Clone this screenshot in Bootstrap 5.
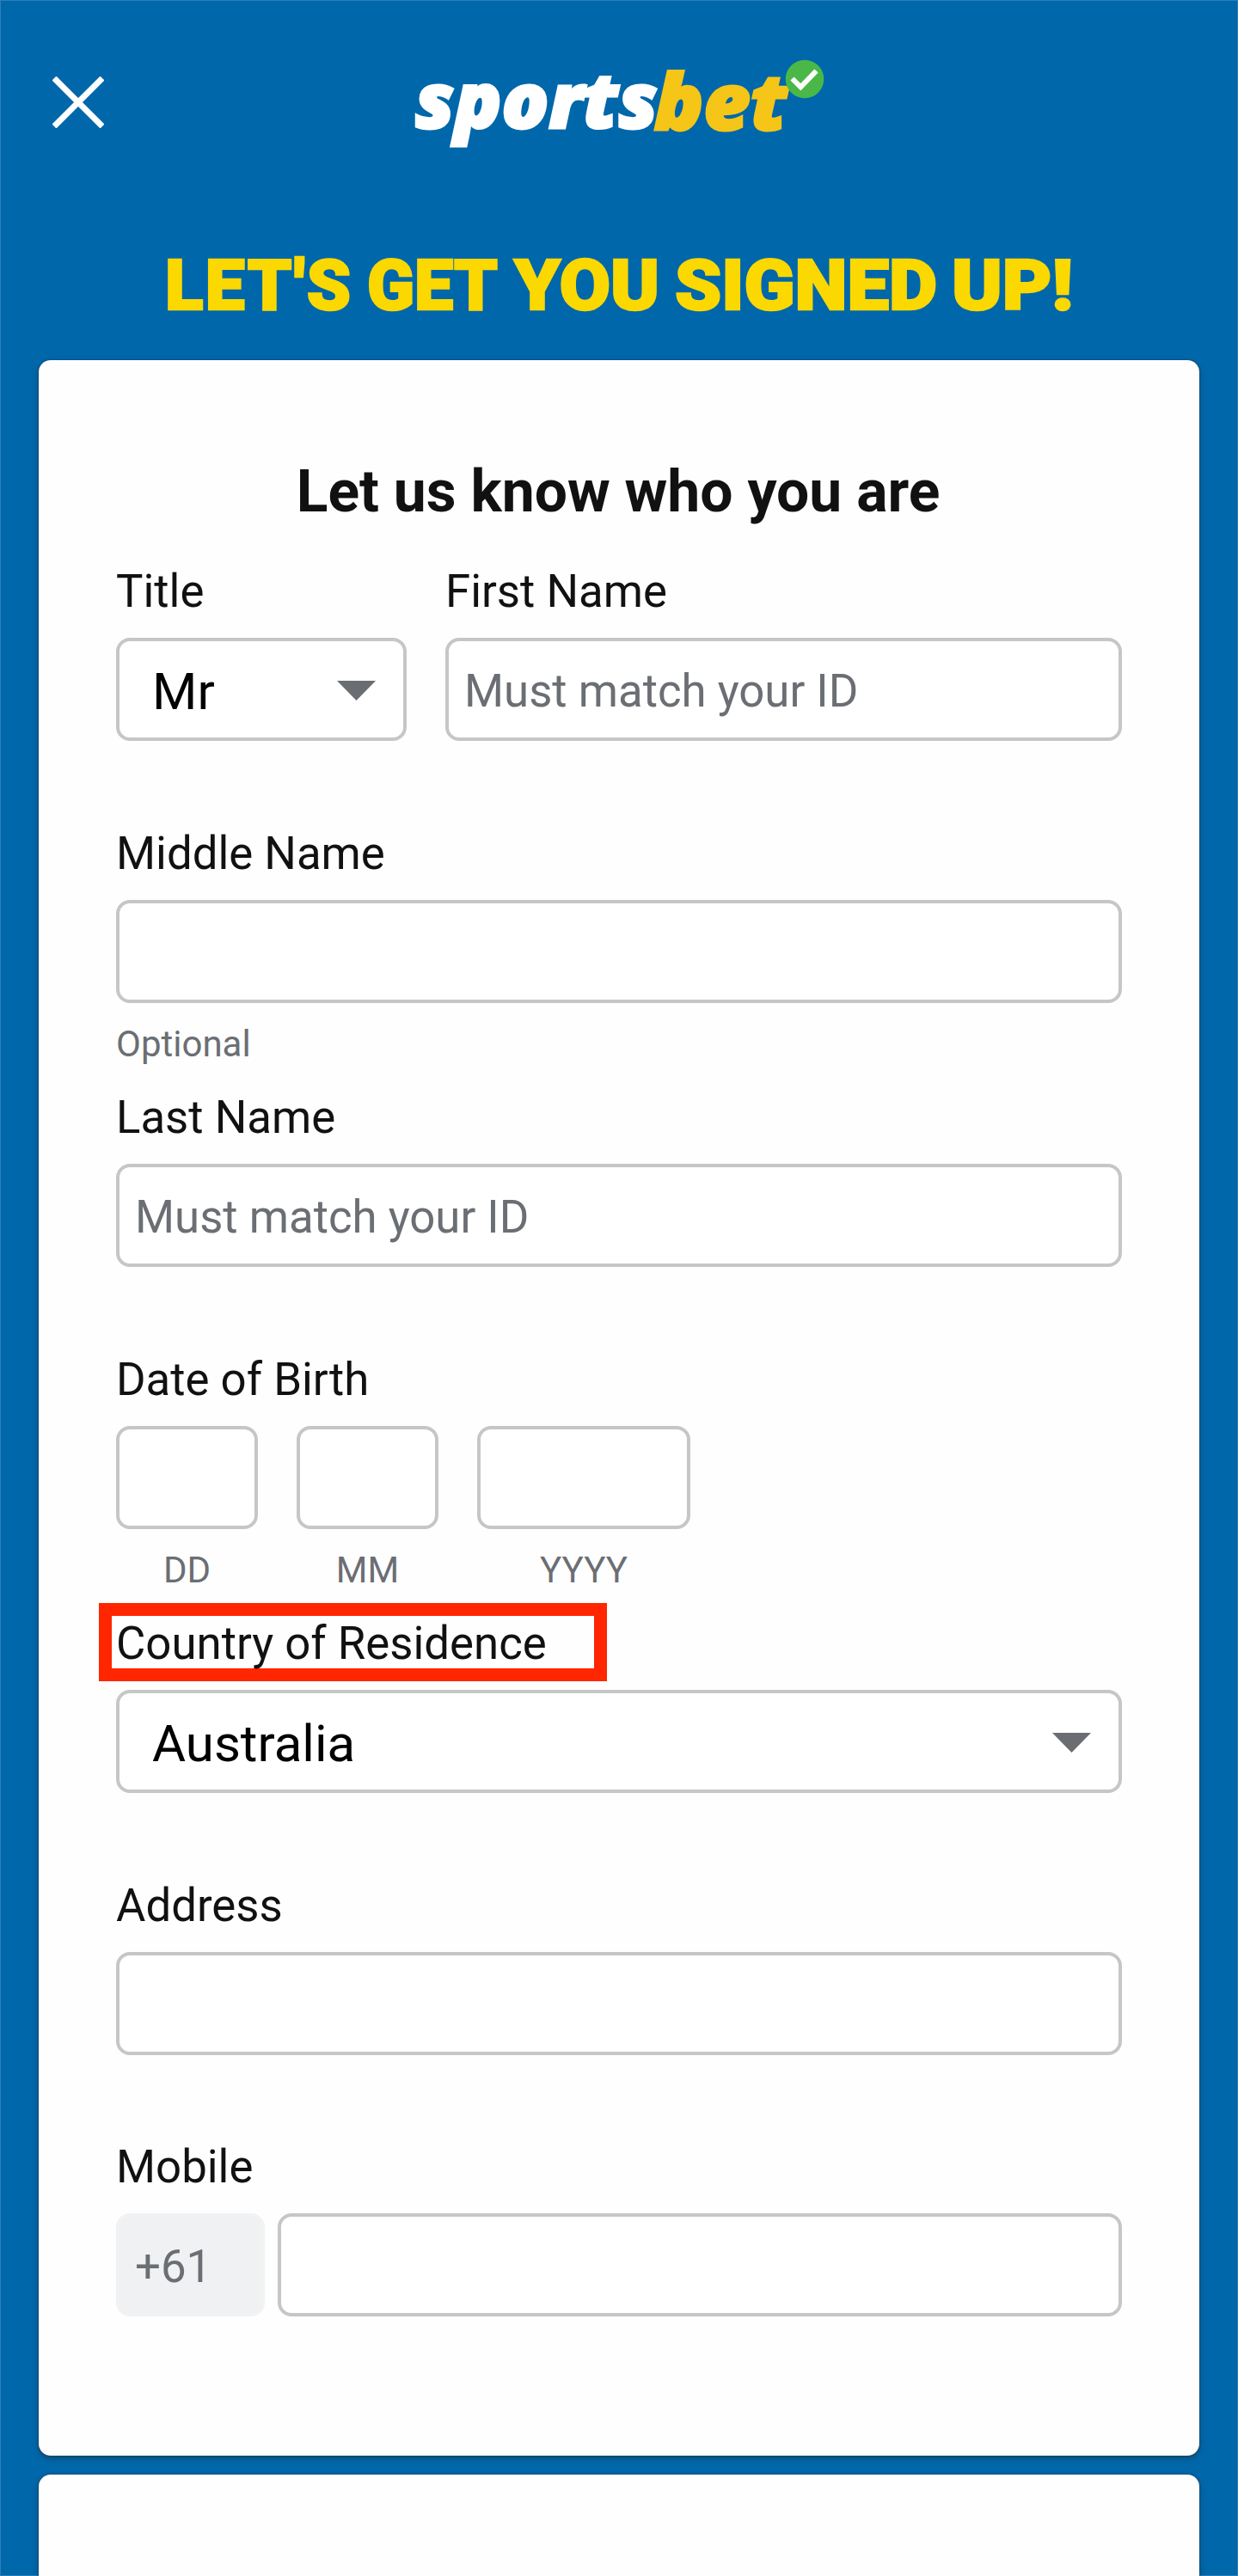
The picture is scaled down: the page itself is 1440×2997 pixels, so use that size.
<!DOCTYPE html>
<html lang="en">
<head>
<meta charset="utf-8">
<meta name="viewport" content="width=device-width, initial-scale=1">
<title>Sportsbet – Sign up</title>
<link href="https://cdn.jsdelivr.net/npm/bootstrap@5.3.0/dist/css/bootstrap.min.css" rel="stylesheet">
<style>
  body { background: #0067ab; color: #111; font-family: Roboto, "Liberation Sans", sans-serif; }
  .signup-page { height: 2997px; padding: 0 45px; box-shadow: inset 0 0 0 1px #2b7fb9; }
  .top-bar { height: 237px; padding: 40px 0 0 16px; }
  .close-btn { width: 60px; height: 60px; margin-top: 49px; line-height: 0; }
  .brand-logo { margin-left: 341px; }
  .headline { height: 182px; margin: 0; }
  .panel { border: 0; border-radius: 14px; background: #fefefe; box-shadow: 0 3px 6px rgba(40,40,40,.5), 0 0 2px rgba(40,40,40,.7); }
  .panel-main { height: 2438px; padding: 112px 90px 0; }
  .panel-next { height: 118px; margin-top: 22px; border-radius: 14px 14px 0 0; }
  .panel-title { font-size: 67.8px; font-weight: 700; line-height: 80px; height: 125px; padding-top: 1px; margin: 0 -10px 0 -12px; }
  .field { height: 305px; }
  .field-hinted { height: 307px; }
  .field-short { height: 304px; }
  .field-label { display: block; font-size: 52.75px; line-height: 62px; padding-top: 1px; margin-bottom: 23px; width: max-content; }
  .box { height: 120px; border: 4px solid #c5c7c7; border-radius: 16px; background: #fff; font-size: 52.75px; line-height: 62px; padding: 3px 18px 0; color: #111; }
  .box::placeholder { color: #6b6e73; opacity: 1; }
  .picker { font-size: 60px; color: #000; padding: 6px 32px 0 38px; }
  .picker svg { margin-bottom: 3px; }
  .hint { font-size: 42px; line-height: 50px; color: #6b6e73; margin-top: 23px; }
  .gap-fields { gap: 45px; }
  .title-col { width: 338px; }
  .day-col { width: 165px; }
  .year-col { width: 248px; }
  .prefix { width: 173px; margin-right: 15px; background: #eff1f3; border-color: #f1f3f3; color: #6b6e73; }
  .highlight { left: -20.5px; top: -15px; width: 591px; height: 91px; border: 15px solid #ff2600; }
</style>
</head>
<body>
<main class="signup-page overflow-hidden">
  <header class="top-bar d-flex align-items-start">
    <button type="button" class="close-btn btn p-0 border-0" aria-label="Close">
      <svg width="60" height="60" viewBox="0 0 60 60" fill="none" stroke="#fff" stroke-width="7"><path d="M2 2 58 58M58 2 2 58"/></svg>
    </button>
    <svg class="brand-logo" width="520" height="160" viewBox="462 40 520 160" role="img" aria-label="sportsbet">
      <g font-family="'Open Sans', sans-serif" font-weight="800" font-style="italic" font-size="88" stroke-width="3">
        <text x="483" y="149" fill="#fff" stroke="#fff" textLength="282" lengthAdjust="spacingAndGlyphs">sports</text>
        <text x="761" y="150.500" font-size="91" fill="#f5c517" stroke="#f5c517" textLength="155" lengthAdjust="spacingAndGlyphs">bet</text>
      </g>
      <circle cx="936" cy="92" r="22.300" fill="#4ab848"/>
      <path d="m921.500 91.500 9.800 9.800L949.500 82.500" fill="none" stroke="#fff" stroke-width="6"/>
    </svg>
  </header>

  <h1 class="headline">
    <svg class="d-block" width="1350" height="182" viewBox="45 237 1350 182" font-family="Roboto, sans-serif" font-weight="900" font-size="82" fill="#fad800" stroke="#fad800" stroke-width="2.500">
      <text x="192" y="359.500" textLength="216" lengthAdjust="spacing">LET'S</text>
      <text x="427" y="359.500" textLength="152" lengthAdjust="spacingAndGlyphs">GET</text>
      <text x="598" y="359.500" textLength="169" lengthAdjust="spacingAndGlyphs">YOU</text>
      <text x="785" y="359.500" textLength="305" lengthAdjust="spacingAndGlyphs">SIGNED</text>
      <text x="1107" y="359.500" textLength="141" lengthAdjust="spacingAndGlyphs">UP!</text>
    </svg>
  </h1>

  <section class="panel panel-main card">
    <h2 class="panel-title text-center">Let us know who you are</h2>
    <form>
      <div class="field d-flex gap-fields">
        <div class="title-col">
          <label class="field-label">Title</label>
          <div class="box picker d-flex align-items-center justify-content-between">
            <span>Mr</span>
            <svg width="45" height="23" viewBox="0 0 45 23"><path d="M0 0h45L22.500 23z" fill="#6a6d71"/></svg>
          </div>
        </div>
        <div class="flex-grow-1">
          <label class="field-label" for="first">First Name</label>
          <input id="first" class="form-control box" placeholder="Must match your ID">
        </div>
      </div>
      <div class="field field-hinted">
        <label class="field-label" for="middle">Middle Name</label>
        <input id="middle" class="form-control box">
        <div class="hint">Optional</div>
      </div>
      <div class="field">
        <label class="field-label" for="last">Last Name</label>
        <input id="last" class="form-control box" placeholder="Must match your ID">
      </div>
      <div class="field field-hinted">
        <label class="field-label">Date of Birth</label>
        <div class="d-flex gap-fields text-center">
          <div class="day-col"><input class="form-control box" aria-label="Day"><div class="hint">DD</div></div>
          <div class="day-col"><input class="form-control box" aria-label="Month"><div class="hint">MM</div></div>
          <div class="year-col"><input class="form-control box" aria-label="Year"><div class="hint">YYYY</div></div>
        </div>
      </div>
      <div class="field position-relative">
        <div class="highlight position-absolute"></div>
        <label class="field-label position-relative">Country of Residence</label>
        <div class="box picker d-flex align-items-center justify-content-between">
          <span>Australia</span>
          <svg width="45" height="23" viewBox="0 0 45 23"><path d="M0 0h45L22.500 23z" fill="#6a6d71"/></svg>
        </div>
      </div>
      <div class="field field-short">
        <label class="field-label" for="address">Address</label>
        <input id="address" class="form-control box">
      </div>
      <div class="field">
        <label class="field-label" for="mobile">Mobile</label>
        <div class="d-flex">
          <div class="box prefix d-flex align-items-center flex-shrink-0">+61</div>
          <input id="mobile" class="form-control box">
        </div>
      </div>
    </form>
  </section>

  <section class="panel panel-next card"></section>
</main>
<script src="https://cdn.jsdelivr.net/npm/bootstrap@5.3.0/dist/js/bootstrap.bundle.min.js"></script>
</body>
</html>
